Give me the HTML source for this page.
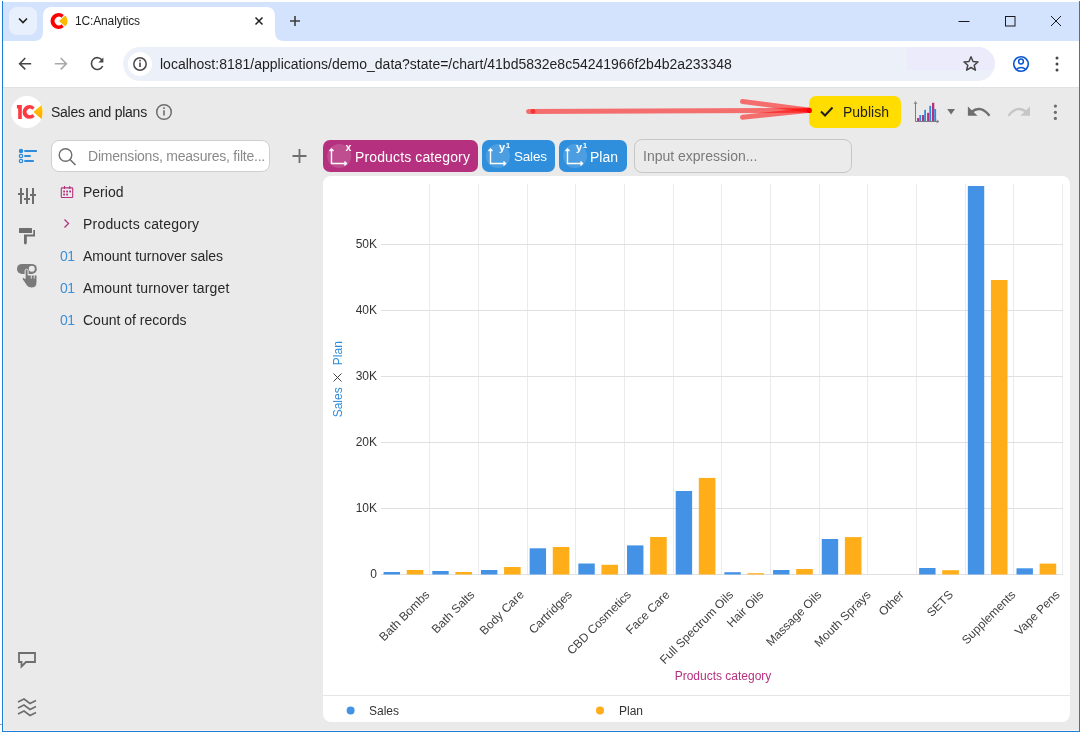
<!DOCTYPE html>
<html><head><meta charset="utf-8">
<style>
body{will-change:transform}
*{box-sizing:border-box;margin:0;padding:0}
html,body{width:1082px;height:736px;overflow:hidden;background:#fff;font-family:"Liberation Sans",sans-serif;position:relative}
.a{position:absolute}
svg{position:absolute;overflow:visible}
.t{position:absolute;white-space:nowrap;line-height:1}
</style></head><body>
<!-- window frame -->
<div class="a" style="left:3px;top:2px;width:1076px;height:39px;background:#d3e3fd"></div>
<div class="a" style="left:3px;top:41px;width:1076px;height:46px;background:#fff"></div>
<div class="a" style="left:3px;top:87px;width:1076px;height:1px;background:#dfe1e3"></div>
<div class="a" style="left:3px;top:88px;width:1076px;height:643px;background:#eaeaea"></div>
<div class="a" style="left:2px;top:1px;width:1px;height:731px;background:#1c7ed6"></div>
<div class="a" style="left:1079px;top:1px;width:1px;height:731px;background:#1c7ed6"></div>
<div class="a" style="left:2px;top:731px;width:1078px;height:1px;background:#1c7ed6"></div>
<div class="a" style="left:3px;top:88px;width:1px;height:643px;background:#f7f3ee"></div>
<div class="a" style="left:3px;top:730px;width:1076px;height:1px;background:#f7f3ee"></div>
<div class="a" style="left:0;top:724px;width:2px;height:1px;background:#9a9a9a"></div>

<!-- tab strip -->
<div class="a" style="left:9px;top:7px;width:28px;height:28px;border-radius:8px;background:#e9f0fd"></div>
<svg style="left:0;top:0" width="1082" height="90">
  <path d="M19 18.5 L23 22.5 L27 18.5" fill="none" stroke="#1f1f1f" stroke-width="1.6"/>
  <!-- active tab -->
  <path d="M34 41 Q43 41 43 32 L43 16 Q43 7 52 7 L266 7 Q275 7 275 16 L275 32 Q275 41 284 41 Z" fill="#fff"/>
  <!-- favicon -->
  <g transform="translate(59,21)">
    <path d="M4.8 -6 A8 8 0 1 0 4.8 6 L2.6 3.2 A4.2 4.2 0 1 1 2.6 -3.2 Z" fill="#ff0000"/>
    <path d="M0 0 L6.3 -5.6 A8.3 8.3 0 0 1 6.3 5.6 Z" fill="#fdb800"/>
  </g>
  <!-- close -->
  <path d="M255.5 17.5 L262.5 24.5 M262.5 17.5 L255.5 24.5" stroke="#1f1f1f" stroke-width="1.5"/>
  <!-- new tab -->
  <path d="M295 16 V26 M290 21 H300" stroke="#3c3c3c" stroke-width="1.6"/>
  <!-- window controls -->
  <path d="M958.5 21.5 H969.5" stroke="#1a1a1a" stroke-width="1"/>
  <rect x="1005.5" y="16.5" width="9.5" height="9.5" fill="none" stroke="#1a1a1a" stroke-width="1"/>
  <path d="M1051 16 L1061 26 M1061 16 L1051 26" stroke="#1a1a1a" stroke-width="1"/>
  <!-- nav -->
  <path d="M31.2 63.7 H20 M25.3 58 L19.6 63.7 L25.3 69.4" fill="none" stroke="#474747" stroke-width="1.6"/>
  <path d="M54.8 63.7 H66 M60.7 58 L66.4 63.7 L60.7 69.4" fill="none" stroke="#a8a8a8" stroke-width="1.6"/>
  <path d="M102.3 60.4 A5.9 5.9 0 1 0 102.7 66" fill="none" stroke="#474747" stroke-width="1.6"/>
  <path d="M103.4 57.4 V62.4 H98.4 Z" fill="#474747"/>
</svg>
<div class="t" style="left:75px;top:15px;font-size:12px;letter-spacing:-0.15px;color:#1f1f1f">1C:Analytics</div>

<!-- omnibox -->
<div class="a" style="left:123px;top:47px;width:872px;height:34px;border-radius:17px;background:#ecf1f9;overflow:hidden"><div class="a" style="left:784px;top:0;width:88px;height:23px;background:#ecebfb"></div></div>
<div class="a" style="left:128px;top:52px;width:24px;height:24px;border-radius:12px;background:#fff"></div>
<svg style="left:0;top:0" width="1082" height="90">
  <circle cx="140" cy="64" r="6.2" fill="none" stroke="#474747" stroke-width="1.5"/>
  <rect x="139.2" y="62.5" width="1.6" height="4.5" fill="#474747"/>
  <rect x="139.2" y="59.8" width="1.6" height="1.6" fill="#474747"/>
  <path d="M971 56.8 L973 61.5 L978 61.9 L974.2 65.2 L975.4 70.2 L971 67.5 L966.6 70.2 L967.8 65.2 L964 61.9 L969 61.5 Z" fill="none" stroke="#474747" stroke-width="1.5" stroke-linejoin="round"/>
  <circle cx="1021" cy="64" r="7.3" fill="none" stroke="#0b57d0" stroke-width="1.6"/>
  <circle cx="1021" cy="61.5" r="2.4" fill="none" stroke="#0b57d0" stroke-width="1.5"/>
  <path d="M1016 69.5 Q1021 65.5 1026 69.5" fill="none" stroke="#0b57d0" stroke-width="1.5"/>
  <circle cx="1057" cy="58" r="1.5" fill="#474747"/>
  <circle cx="1057" cy="64" r="1.5" fill="#474747"/>
  <circle cx="1057" cy="70" r="1.5" fill="#474747"/>
</svg>
<div class="t" style="left:160px;top:57px;font-size:14px;color:#1f1f1f">localhost:8181/applications/demo_data?state=/chart/41bd5832e8c54241966f2b4b2a233348</div>


<!-- app header -->
<div class="a" style="left:11px;top:96px;width:32px;height:32px;border-radius:16px;background:#fff"></div>
<svg style="left:0;top:0" width="1082" height="736">
  <defs><linearGradient id="yg" x1="0" y1="0" x2="0" y2="1"><stop offset="0" stop-color="#ffcc00"/><stop offset="1" stop-color="#ffa600"/></linearGradient></defs>
  <g fill="#fd3a3f">
    <path d="M16.9 104.9 H21.8 V118.9 H18.2 V108.6 H16.9 Z"/>
    <path d="M34.7 107.4 A6.9 6.9 0 1 0 34.7 116.4 L32.3 114 A3.2 3.2 0 1 1 32.3 109.8 Z"/>
  </g>
  <path d="M33.4 111.9 L41.5 104.9 Q43.6 111.9 41.5 118.9 Z" fill="url(#yg)"/>
  <circle cx="164" cy="112" r="7.3" fill="none" stroke="#6e6e6e" stroke-width="1.5"/>
  <rect x="163.2" y="110.3" width="1.6" height="5.2" fill="#6e6e6e"/>
  <rect x="163.2" y="107.3" width="1.6" height="1.7" fill="#6e6e6e"/>
</svg>
<div class="t" style="left:51px;top:105px;font-size:14px;letter-spacing:-0.25px;color:#262626">Sales and plans</div>

<!-- red annotation arrow -->
<svg style="left:0;top:0" width="1082" height="736">
  <g stroke="rgba(255,0,0,0.53)" stroke-width="5" stroke-linecap="round" fill="none">
    <path d="M528.5 111.5 L810 110.3"/>
    <path d="M742.5 101.5 L810 110.3"/>
    <path d="M742.5 117.3 L810 110.3"/>
  </g>
  <circle cx="533" cy="111.4" r="2.4" fill="rgba(255,0,0,0.55)"/>
</svg>

<!-- publish -->
<div class="a" style="left:809px;top:96px;width:92px;height:32px;border-radius:7px;background:#ffdd00"></div>
<svg style="left:0;top:0" width="1082" height="736">
  <circle cx="809.3" cy="110.4" r="2.6" fill="#ff0000"/>
  <path d="M821 111.5 L825 115.5 L832.5 107.5" fill="none" stroke="#1f1f1f" stroke-width="2"/>
</svg>
<div class="t" style="left:843px;top:105px;font-size:14px;color:#1f1f1f">Publish</div>
<svg style="left:0;top:0" width="1082" height="736">
  <!-- chart type icon -->
  <path d="M915.5 102.5 V121.5 H938.5" fill="none" stroke="#7a7a7a" stroke-width="1"/>
  <path d="M914 104 L915.5 101.5 L917 104 M936.5 120 L939 121.5 L936.5 123" fill="none" stroke="#7a7a7a" stroke-width="0.8"/>
  <g fill="#b5317f">
    <rect x="917.1" y="118" width="2.2" height="3"/>
    <rect x="922" y="115" width="2.2" height="6"/>
    <rect x="927.1" y="112.8" width="2.2" height="8.2"/>
    <rect x="932" y="102.8" width="2.3" height="18.2"/>
  </g>
  <g fill="#2d8cdc">
    <rect x="919.3" y="115" width="1.8" height="6"/>
    <rect x="924.2" y="109.8" width="1.8" height="11.2"/>
    <rect x="929.3" y="105.8" width="1.8" height="15.2"/>
    <rect x="934.3" y="109" width="1.8" height="12"/>
  </g>
  <path d="M947.2 109 H955 L951.1 114.5 Z" fill="#6e6e6e"/>
  <!-- undo -->
  <path d="M967.9 106.5 V115.7 H977.5 Z" fill="#6e6e6e"/>
  <path d="M971.5 112 Q980.5 104.5 989.5 115.7" fill="none" stroke="#6e6e6e" stroke-width="2.3"/>
  <!-- redo -->
  <path d="M1030 106.5 V115.7 H1020.4 Z" fill="#c6c6c6"/>
  <path d="M1026.4 112 Q1017.4 104.5 1008.4 115.7" fill="none" stroke="#c6c6c6" stroke-width="2.3"/>
  <circle cx="1055.4" cy="106.1" r="1.6" fill="#6e6e6e"/>
  <circle cx="1055.4" cy="112.3" r="1.6" fill="#6e6e6e"/>
  <circle cx="1055.4" cy="118.4" r="1.6" fill="#6e6e6e"/>
</svg>

<!-- sidebar icons -->
<svg style="left:0;top:0" width="1082" height="736">
  <g fill="#2d8cdc" stroke="#2d8cdc">
    <circle cx="21" cy="151" r="2.2" stroke="none"/>
    <circle cx="21" cy="156" r="1.7" fill="none" stroke-width="1.2"/>
    <circle cx="21" cy="161" r="1.7" fill="none" stroke-width="1.2"/>
    <rect x="24.3" y="150" width="12.6" height="2" stroke="none"/>
    <rect x="24.3" y="155" width="6.4" height="2" stroke="none"/>
    <rect x="24.3" y="160" width="9.5" height="2" stroke="none"/>
  </g>
  <g fill="#6e6e6e">
    <rect x="20" y="188" width="2" height="16"/>
    <rect x="26" y="188" width="2" height="16"/>
    <rect x="32" y="188" width="2" height="16"/>
    <rect x="18" y="193" width="6" height="2"/>
    <rect x="24" y="198" width="6" height="2"/>
    <rect x="30" y="194" width="6" height="2"/>
  </g>
  <g fill="#6e6e6e">
    <rect x="19" y="228" width="13" height="5" rx="0.5"/>
    <path d="M32 230 H35 V236.5 H26.8 V243 A1.4 1.4 0 0 1 24 243 V234.5 H33.3 V230 Z"/>
  </g>
  <g>
    <rect x="17" y="263.9" width="19.8" height="10" rx="5" fill="#7a7a7a"/>
    <circle cx="31.8" cy="268.8" r="3" fill="#eaeaea"/>
    <path d="M25.1 270.8 Q25.1 269.3 26.6 269.3 Q28.1 269.3 28.1 270.8 V275 H35.8 Q37 275 37 276.2 V282 Q37 288 31.5 288 Q28.5 288 26.5 285.5 L22.3 279.3 Q21.8 277.3 23.3 277.4 Q24.3 277.6 25.1 278.6 Z" fill="#7a7a7a" stroke="#eaeaea" stroke-width="1"/>
    <path d="M31.3 275.3 V278.6 M34.2 275.3 V278.6" stroke="#eaeaea" stroke-width="0.9"/>
  </g>
  <!-- bottom icons -->
  <path d="M19 653 H35 V662 H26 L21.5 666.5 V662 H19 Z" fill="none" stroke="#6e6e6e" stroke-width="1.8" stroke-linejoin="miter"/>
  <g fill="none" stroke="#6e6e6e" stroke-width="1.6">
    <path d="M18 702 L24 699 L30 703.5 L36 700.5"/>
    <path d="M18 708 L24 705 L30 709.5 L36 706.5"/>
    <path d="M18 714 L24 711 L30 715.5 L36 712.5"/>
  </g>
</svg>

<!-- search -->
<div class="a" style="left:51px;top:140px;width:219px;height:32px;border-radius:8px;background:#fff;border:1px solid #cfcfcf"></div>
<svg style="left:0;top:0" width="1082" height="736">
  <circle cx="65.5" cy="155" r="6.3" fill="none" stroke="#6e6e6e" stroke-width="1.4"/>
  <path d="M70 159.5 L75.5 165" stroke="#6e6e6e" stroke-width="1.6"/>
  <path d="M299.5 149 V163 M292.5 156 H306.5" stroke="#6e6e6e" stroke-width="1.8"/>
</svg>
<div class="t" style="left:88px;top:149px;font-size:14px;letter-spacing:-0.22px;color:#8a8a8a">Dimensions, measures, filte...</div>

<!-- list -->
<svg style="left:0;top:0" width="1082" height="736">
  <g fill="none" stroke="#b5317f" stroke-width="1.1">
    <rect x="61.3" y="187.9" width="11.4" height="9.6" rx="0.6"/>
    <path d="M64.5 186 V189 M69.7 186 V189"/>
  </g>
  <g fill="#b5317f">
    <rect x="63.2" y="190.6" width="1.8" height="1.8"/><rect x="66.2" y="190.6" width="1.8" height="1.8"/><rect x="69.2" y="190.6" width="1.8" height="1.8"/>
    <rect x="63.2" y="193.6" width="1.8" height="1.8"/><rect x="66.2" y="193.6" width="1.8" height="1.8"/>
  </g>
  <path d="M64.5 219.5 L68.5 223.5 L64.5 227.5" fill="none" stroke="#b5317f" stroke-width="1.3"/>
</svg>
<div class="t" style="left:83px;top:185px;font-size:14px;color:#282828">Period</div>
<div class="t" style="left:83px;top:217px;font-size:14px;letter-spacing:0.2px;color:#282828">Products category</div>
<div class="t" style="left:60px;top:249px;font-size:14px;letter-spacing:-0.6px;color:#3d8fd8">01</div>
<div class="t" style="left:83px;top:249px;font-size:14px;color:#282828">Amount turnover sales</div>
<div class="t" style="left:60px;top:281px;font-size:14px;letter-spacing:-0.6px;color:#3d8fd8">01</div>
<div class="t" style="left:83px;top:281px;font-size:14px;letter-spacing:0.15px;color:#282828">Amount turnover target</div>
<div class="t" style="left:60px;top:313px;font-size:14px;letter-spacing:-0.6px;color:#3d8fd8">01</div>
<div class="t" style="left:83px;top:313px;font-size:14px;color:#282828">Count of records</div>

<!-- pills -->
<div class="a" style="left:323px;top:140px;width:155px;height:32px;border-radius:7px;background:#b5317f"></div>
<div class="a" style="left:482px;top:140px;width:73px;height:32px;border-radius:7px;background:#2f8fdd"></div>
<div class="a" style="left:559px;top:140px;width:68px;height:32px;border-radius:7px;background:#2f8fdd"></div>
<div class="a" style="left:634px;top:139px;width:218px;height:34px;border-radius:8px;border:1px solid #c6c6c6;background:#ebebeb"></div>
<svg style="left:0;top:0" width="1082" height="736">
  <g fill="rgba(255,255,255,0.14)">
    <circle cx="339.2" cy="156" r="12"/>
    <circle cx="498" cy="156" r="12"/>
    <circle cx="575" cy="156" r="12"/>
  </g>
  <g fill="none" stroke="#fff" stroke-width="1.4">
    <path d="M331.5 149 V163.5 H346.5 M329.5 151 L331.5 149 L333.5 151 M344.5 161.5 L346.5 163.5 L344.5 165.5"/>
    <path d="M490.5 149 V163.5 H505.5 M488.5 151 L490.5 149 L492.5 151 M503.5 161.5 L505.5 163.5 L503.5 165.5"/>
    <path d="M567.5 149 V163.5 H582.5 M565.5 151 L567.5 149 L569.5 151 M580.5 161.5 L582.5 163.5 L580.5 165.5"/>
  </g>
</svg>
<div class="t" style="left:345.5px;top:142px;font-size:10.5px;font-weight:bold;color:#fff">x</div>
<div class="t" style="left:499px;top:142px;font-size:11px;font-weight:bold;color:#fff">y<span style="font-size:8px;vertical-align:3px;margin-left:0.5px">1</span></div>
<div class="t" style="left:576px;top:142px;font-size:11px;font-weight:bold;color:#fff">y<span style="font-size:8px;vertical-align:3px;margin-left:0.5px">1</span></div>
<div class="t" style="left:355px;top:150px;font-size:14px;letter-spacing:0.13px;color:#fff">Products category</div>
<div class="t" style="left:514px;top:150px;font-size:13.5px;letter-spacing:-0.2px;color:#fff">Sales</div>
<div class="t" style="left:590px;top:150px;font-size:14px;color:#fff">Plan</div>
<div class="t" style="left:643px;top:149px;font-size:14px;color:#7a7a7a">Input expression...</div>

<!-- chart panel -->
<div class="a" style="left:323px;top:176px;width:747px;height:546px;border-radius:8px;background:#fff"></div>
<!--CHART--><svg style="left:0;top:0" width="1082" height="736">
<g stroke="#ebebeb" stroke-width="1">
<path d="M429.5 184 V574"/>
<path d="M478.5 184 V574"/>
<path d="M527.5 184 V574"/>
<path d="M575.5 184 V574"/>
<path d="M624.5 184 V574"/>
<path d="M673.5 184 V574"/>
<path d="M721.5 184 V574"/>
<path d="M770.5 184 V574"/>
<path d="M819.5 184 V574"/>
<path d="M867.5 184 V574"/>
<path d="M916.5 184 V574"/>
<path d="M965.5 184 V574"/>
<path d="M1013.5 184 V574"/>
<path d="M1062.5 184 V574"/>
</g>
<g stroke="#e0e0e0" stroke-width="1">
<path d="M381 574.5 H1063"/>
<path d="M381 508.5 H1063"/>
<path d="M381 442.5 H1063"/>
<path d="M381 376.5 H1063"/>
<path d="M381 310.5 H1063"/>
<path d="M381 244.5 H1063"/>
</g>
<g fill="#4392e6">
<rect x="383.60" y="572.00" width="16.4" height="2.50"/>
<rect x="432.29" y="571.00" width="16.4" height="3.50"/>
<rect x="480.97" y="570.00" width="16.4" height="4.50"/>
<rect x="529.66" y="548.30" width="16.4" height="26.20"/>
<rect x="578.34" y="563.50" width="16.4" height="11.00"/>
<rect x="627.03" y="545.40" width="16.4" height="29.10"/>
<rect x="675.71" y="491.00" width="16.4" height="83.50"/>
<rect x="724.40" y="572.20" width="16.4" height="2.30"/>
<rect x="773.09" y="570.00" width="16.4" height="4.50"/>
<rect x="821.77" y="539.00" width="16.4" height="35.50"/>
<rect x="919.14" y="568.00" width="16.4" height="6.50"/>
<rect x="967.83" y="186.00" width="16.4" height="388.50"/>
<rect x="1016.51" y="568.30" width="16.4" height="6.20"/>
</g><g fill="#ffae1a">
<rect x="406.70" y="570.00" width="16.6" height="4.50"/>
<rect x="455.39" y="572.00" width="16.6" height="2.50"/>
<rect x="504.07" y="567.00" width="16.6" height="7.50"/>
<rect x="552.76" y="547.00" width="16.6" height="27.50"/>
<rect x="601.44" y="564.80" width="16.6" height="9.70"/>
<rect x="650.13" y="537.00" width="16.6" height="37.50"/>
<rect x="698.81" y="477.90" width="16.6" height="96.60"/>
<rect x="747.50" y="573.20" width="16.6" height="1.30"/>
<rect x="796.19" y="569.00" width="16.6" height="5.50"/>
<rect x="844.87" y="537.10" width="16.6" height="37.40"/>
<rect x="942.24" y="570.20" width="16.6" height="4.30"/>
<rect x="990.93" y="280.00" width="16.6" height="294.50"/>
<rect x="1039.61" y="563.60" width="16.6" height="10.90"/>
</g>
<g font-family="Liberation Sans" font-size="12" fill="#333" text-anchor="end">
<text x="377" y="578.1">0</text>
<text x="377" y="512.1">10K</text>
<text x="377" y="446.1">20K</text>
<text x="377" y="380.1">30K</text>
<text x="377" y="314.1">40K</text>
<text x="377" y="248.1">50K</text>
</g>
<g font-family="Liberation Sans" font-size="12" fill="#404040" text-anchor="end">
<text transform="translate(430.29,595.4) rotate(-45)">Bath Bombs</text>
<text transform="translate(475.21,595.4) rotate(-45)">Bath Salts</text>
<text transform="translate(524.60,595.4) rotate(-45)">Body Care</text>
<text transform="translate(572.81,595.4) rotate(-45)">Cartridges</text>
<text transform="translate(631.86,595.4) rotate(-45)">CBD Cosmetics</text>
<text transform="translate(670.42,595.4) rotate(-45)">Face Care</text>
<text transform="translate(733.95,595.4) rotate(-45)">Full Spectrum Oils</text>
<text transform="translate(764.25,595.4) rotate(-45)">Hair Oils</text>
<text transform="translate(822.37,595.4) rotate(-45)">Massage Oils</text>
<text transform="translate(871.53,595.4) rotate(-45)">Mouth Sprays</text>
<text transform="translate(904.65,595.4) rotate(-45)">Other</text>
<text transform="translate(953.81,595.4) rotate(-45)">SETS</text>
<text transform="translate(1016.17,595.4) rotate(-45)">Supplements</text>
<text transform="translate(1060.54,595.4) rotate(-45)">Vape Pens</text>
</g>
<text x="723" y="680" font-family="Liberation Sans" font-size="12" fill="#b5317f" text-anchor="middle">Products category</text>
<g font-family="Liberation Sans" font-size="12" text-anchor="middle" fill="#2d8cdc"><text transform="translate(342.3,402.3) rotate(-90)">Sales</text><text transform="translate(342.3,353.2) rotate(-90)">Plan</text></g>
<path d="M333.5 373.5 L341.5 381.5 M341.5 373.5 L333.5 381.5" stroke="#444" stroke-width="1"/>
<path d="M323 695.5 H1070" stroke="#e6e6e6"/>
<circle cx="350.6" cy="710.6" r="4" fill="#4392e6"/>
<circle cx="600" cy="710.6" r="4" fill="#ffae1a"/>
<text x="369" y="715" font-family="Liberation Sans" font-size="12" fill="#333">Sales</text>
<text x="619" y="715" font-family="Liberation Sans" font-size="12" fill="#333">Plan</text>
</svg><!--/CHART-->

</body></html>
